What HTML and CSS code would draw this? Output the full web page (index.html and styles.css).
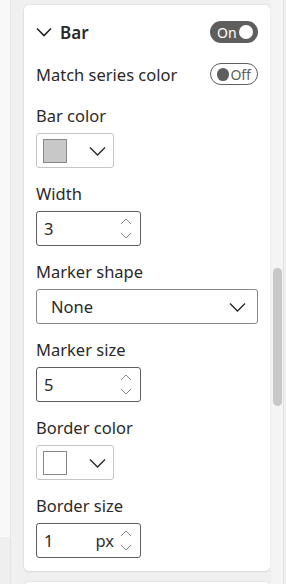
FILE: index.html
```html
<!DOCTYPE html>
<html lang="en">
<head>
    <meta charset="UTF-8">
    <meta name="viewport" content="width=device-width, initial-scale=1.0">
    <title>Format pane - Bar</title>
    <link rel="stylesheet" href="styles.css">
</head>
<body>
    <div class="rail">
        <div class="rail-top"></div>
        <div class="rail-bottom"></div>
    </div>

    <div class="pane">
        <section class="card">
            <div class="card-head">
                <div class="card-title">
                    <svg class="chev-head" width="16" height="10" viewBox="0 0 16 10"><path d="M1 1.5l7 7 7-7"/></svg>
                    <span>Bar</span>
                </div>
                <span class="toggle on">On<i></i></span>
            </div>

            <div class="row">
                <span>Match series color</span>
                <span class="toggle off"><i></i>Off</span>
            </div>

            <div class="field">
                <div class="label">Bar color</div>
                <div class="color-pick">
                    <span class="swatch grey"></span>
                    <svg class="chev" width="17" height="10" viewBox="0 0 17 10"><path d="M1 1.5l7.5 7.5 7.5-7.5"/></svg>
                </div>
            </div>

            <div class="field">
                <div class="label">Width</div>
                <div class="spin">
                    <span class="value">3</span>
                    <span class="arrows">
                        <svg width="12" height="7" viewBox="0 0 12 7"><path d="M1 6l5-5 5 5"/></svg>
                        <svg width="12" height="7" viewBox="0 0 12 7"><path d="M1 1l5 5 5-5"/></svg>
                    </span>
                </div>
            </div>

            <div class="field">
                <div class="label">Marker shape</div>
                <div class="dropdown">
                    <span>None</span>
                    <svg class="chev" width="17" height="10" viewBox="0 0 17 10"><path d="M1 1.5l7.5 7.5 7.5-7.5"/></svg>
                </div>
            </div>

            <div class="field">
                <div class="label">Marker size</div>
                <div class="spin">
                    <span class="value">5</span>
                    <span class="arrows">
                        <svg width="12" height="7" viewBox="0 0 12 7"><path d="M1 6l5-5 5 5"/></svg>
                        <svg width="12" height="7" viewBox="0 0 12 7"><path d="M1 1l5 5 5-5"/></svg>
                    </span>
                </div>
            </div>

            <div class="field">
                <div class="label">Border color</div>
                <div class="color-pick">
                    <span class="swatch white"></span>
                    <svg class="chev" width="17" height="10" viewBox="0 0 17 10"><path d="M1 1.5l7.5 7.5 7.5-7.5"/></svg>
                </div>
            </div>

            <div class="field">
                <div class="label">Border size</div>
                <div class="spin">
                    <span class="value">1</span>
                    <span class="unit">px</span>
                    <span class="arrows">
                        <svg width="12" height="7" viewBox="0 0 12 7"><path d="M1 6l5-5 5 5"/></svg>
                        <svg width="12" height="7" viewBox="0 0 12 7"><path d="M1 1l5 5 5-5"/></svg>
                    </span>
                </div>
            </div>
        </section>

        <section class="card next"></section>
    </div>

    <div class="scroll">
        <div class="thumb"></div>
    </div>
</body>
</html>
```

FILE: styles.css
```css
html, body {
    height: 100%;
}
body {
    margin: 0;
    display: flex;
    overflow: hidden;
    background-color: #f0f0f0;
    font-family: 'Noto Sans', 'Open Sans', sans-serif;
    color: #2b2a29;
}

/* left rail */
.rail {
    width: 10px;
    display: flex;
    flex-direction: column;
    border-right: 1px solid #e6e6e6;
}
.rail-top {
    height: 537px;
    background-color: #f8f8f8;
}
.rail-bottom {
    flex: 1;
    background-color: #efefef;
}

/* cards */
.pane {
    width: 246px;
    height: 100%;
    box-sizing: border-box;
    overflow: hidden;
    padding: 5px 0 0 13px;
    box-sizing: content-box;
}
.card {
    background-color: #fff;
    border-radius: 5px;
    box-shadow: 0 0 2px rgba(0, 0, 0, 0.12), 0 1px 3px rgba(0, 0, 0, 0.06);
    padding: 16px 12px 13px;
}
.card.next {
    margin-top: 11px;
    height: 20px;
    padding: 0;
}

.card-head, .row {
    height: 22px;
    display: flex;
    align-items: center;
    justify-content: space-between;
}
.card-title {
    display: flex;
    align-items: center;
    font-size: 17px;
    font-weight: 600;
}
.chev-head {
    fill: none;
    stroke: #252423;
    stroke-width: 1.6;
    margin-right: 8px;
}
.row {
    margin-top: 20px;
    font-size: 16.5px;
}

/* toggles */
.toggle {
    width: 48px;
    height: 22px;
    box-sizing: border-box;
    border-radius: 11px;
    display: flex;
    align-items: center;
    font-size: 14px;
}
.toggle i {
    width: 14px;
    height: 14px;
    border-radius: 50%;
}
.toggle.on {
    background-color: #605e5c;
    color: #fff;
    padding: 0 5px 0 7px;
    justify-content: space-between;
}
.toggle.on i {
    background-color: #fff;
}
.toggle.off {
    border: 1px solid #605e5c;
    color: #605e5c;
    padding: 0 6px;
    gap: 1px;
}
.toggle.off i {
    width: 13px;
    height: 13px;
    background-color: #605e5c;
}

/* fields */
.field {
    margin-top: 15px;
}
.row + .field {
    margin-top: 20px;
}
.label {
    height: 22px;
    line-height: 22px;
    font-size: 16.5px;
    margin-bottom: 6px;
}
.color-pick, .spin, .dropdown {
    height: 35px;
    box-sizing: border-box;
    border-radius: 3px;
    display: flex;
    align-items: center;
}
.color-pick {
    width: 78px;
    border: 1px solid #c8c6c4;
    padding: 0 7px 0 6px;
    justify-content: space-between;
}
.swatch {
    width: 24px;
    height: 24px;
    box-sizing: border-box;
    border: 1px solid #8a8886;
}
.swatch.grey {
    background-color: #c8c8c8;
}
.swatch.white {
    background-color: #fff;
}
.chev {
    fill: none;
    stroke: #252423;
    stroke-width: 1.3;
}

.spin {
    width: 105px;
    border: 1px solid #605e5c;
    padding: 0 8px 0 7px;
    font-size: 16.5px;
}
.spin .value {
    flex: 1;
}
.spin .unit {
    margin-right: 6px;
    color: #323130;
}
.arrows {
    display: flex;
    flex-direction: column;
    gap: 7px;
}
.arrows svg {
    fill: none;
    stroke: #8a8886;
    stroke-width: 1;
}

.dropdown {
    width: 222px;
    border: 1px solid #8a8886;
    padding: 0 11px 0 14px;
    justify-content: space-between;
    font-size: 16.5px;
}

/* scrollbar */
.scroll {
    width: 13px;
    margin-left: 1px;
    background-color: #f4f4f4;
    border-right: 1px solid #e2e2e2;
    padding-top: 268px;
    box-sizing: border-box;
}
.thumb {
    width: 9px;
    height: 138px;
    margin-left: 2px;
    border-radius: 5px;
    background-color: #c8c8c8;
}
```
